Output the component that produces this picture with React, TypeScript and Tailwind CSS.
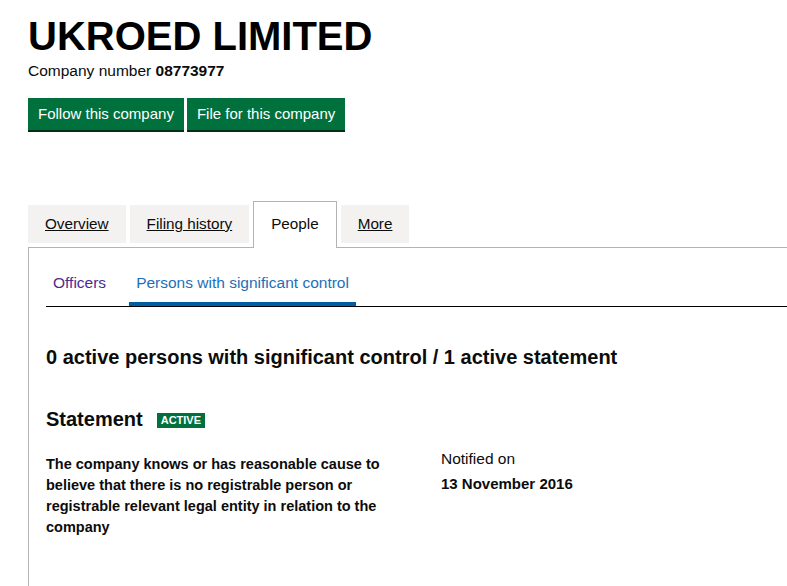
import React from "react";

const sans = { fontFamily: '"Liberation Sans", Arial, sans-serif' };

export default function App() {
  return (
    <div className="min-h-[586px] w-[787px] overflow-hidden bg-white text-[#0b0c0c]" style={sans}>
      <div className="pl-[28px] pt-[14px]">
        <h1 className="text-[40px] font-bold leading-[44px] text-black">UKROED LIMITED</h1>
        <p className="mt-[3px] text-[15.5px] leading-[20px]">
          Company number <span className="font-bold">08773977</span>
        </p>
        <div className="mt-[17px] flex gap-[3px]">
          <button className="h-[32px] bg-[#00703c] px-[10px] text-[15px] leading-[20px] text-white shadow-[0_2px_0_#002d18]">
            Follow this company
          </button>
          <button className="h-[32px] bg-[#00703c] px-[10px] text-[15px] leading-[20px] text-white shadow-[0_2px_0_#002d18]">
            File for this company
          </button>
        </div>

        <div className="relative z-10 mt-[71px] mb-[-1px] flex items-end gap-[4px]">
          <a className="mb-[5px] h-[38px] bg-[#f3f2f1] px-[17px] pt-[9px] text-[15.25px] leading-[20px] underline">Overview</a>
          <a className="mb-[5px] h-[38px] bg-[#f3f2f1] px-[17px] pt-[9px] text-[15.25px] leading-[20px] underline">Filing history</a>
          <a className="h-[47px] border border-b-0 border-[#b1b4b6] bg-white px-[17px] pt-[12px] text-[15.25px] leading-[20px]">People</a>
          <a className="mb-[5px] h-[38px] bg-[#f3f2f1] px-[17px] pt-[9px] text-[15.25px] leading-[20px] underline">More</a>
        </div>

        <div className="min-h-[340px] border-l border-t border-[#b1b4b6] pl-[17px]">
          <nav className="flex gap-[16px] border-b border-black pt-[25px]">
            <a className="border-b-4 border-transparent px-[7px] pb-[9px] text-[15.5px] leading-[20px] text-[#4c2c92]">Officers</a>
            <a className="border-b-4 border-[#005ea5] px-[7px] pb-[9px] text-[15.5px] leading-[20px] text-[#1d70b8]">
              Persons with significant control
            </a>
          </nav>

          <h2 className="mt-[38px] text-[20px] font-bold leading-[25px]">
            0 active persons with significant control / 1 active statement
          </h2>

          <div className="mt-[37px] flex items-center gap-[14px]">
            <h3 className="text-[20px] font-bold leading-[25px]">Statement</h3>
            <span className="mt-[2px] bg-[#00703c] px-[4px] text-[11px] font-bold leading-[15px] text-white">ACTIVE</span>
          </div>

          <div className="mt-[22px] flex">
            <p className="w-[365px] text-[14.5px] font-bold leading-[21px]">
              The company knows or has reasonable cause to believe that there is no registrable person or registrable relevant legal entity in relation to the company
            </p>
            <div className="ml-[30px] mt-[-5px]">
              <p className="text-[15.5px] leading-[20px]">Notified on</p>
              <p className="mt-[5px] text-[15px] font-bold leading-[20px]">13 November 2016</p>
            </div>
          </div>
        </div>
      </div>
    </div>
  );
}
